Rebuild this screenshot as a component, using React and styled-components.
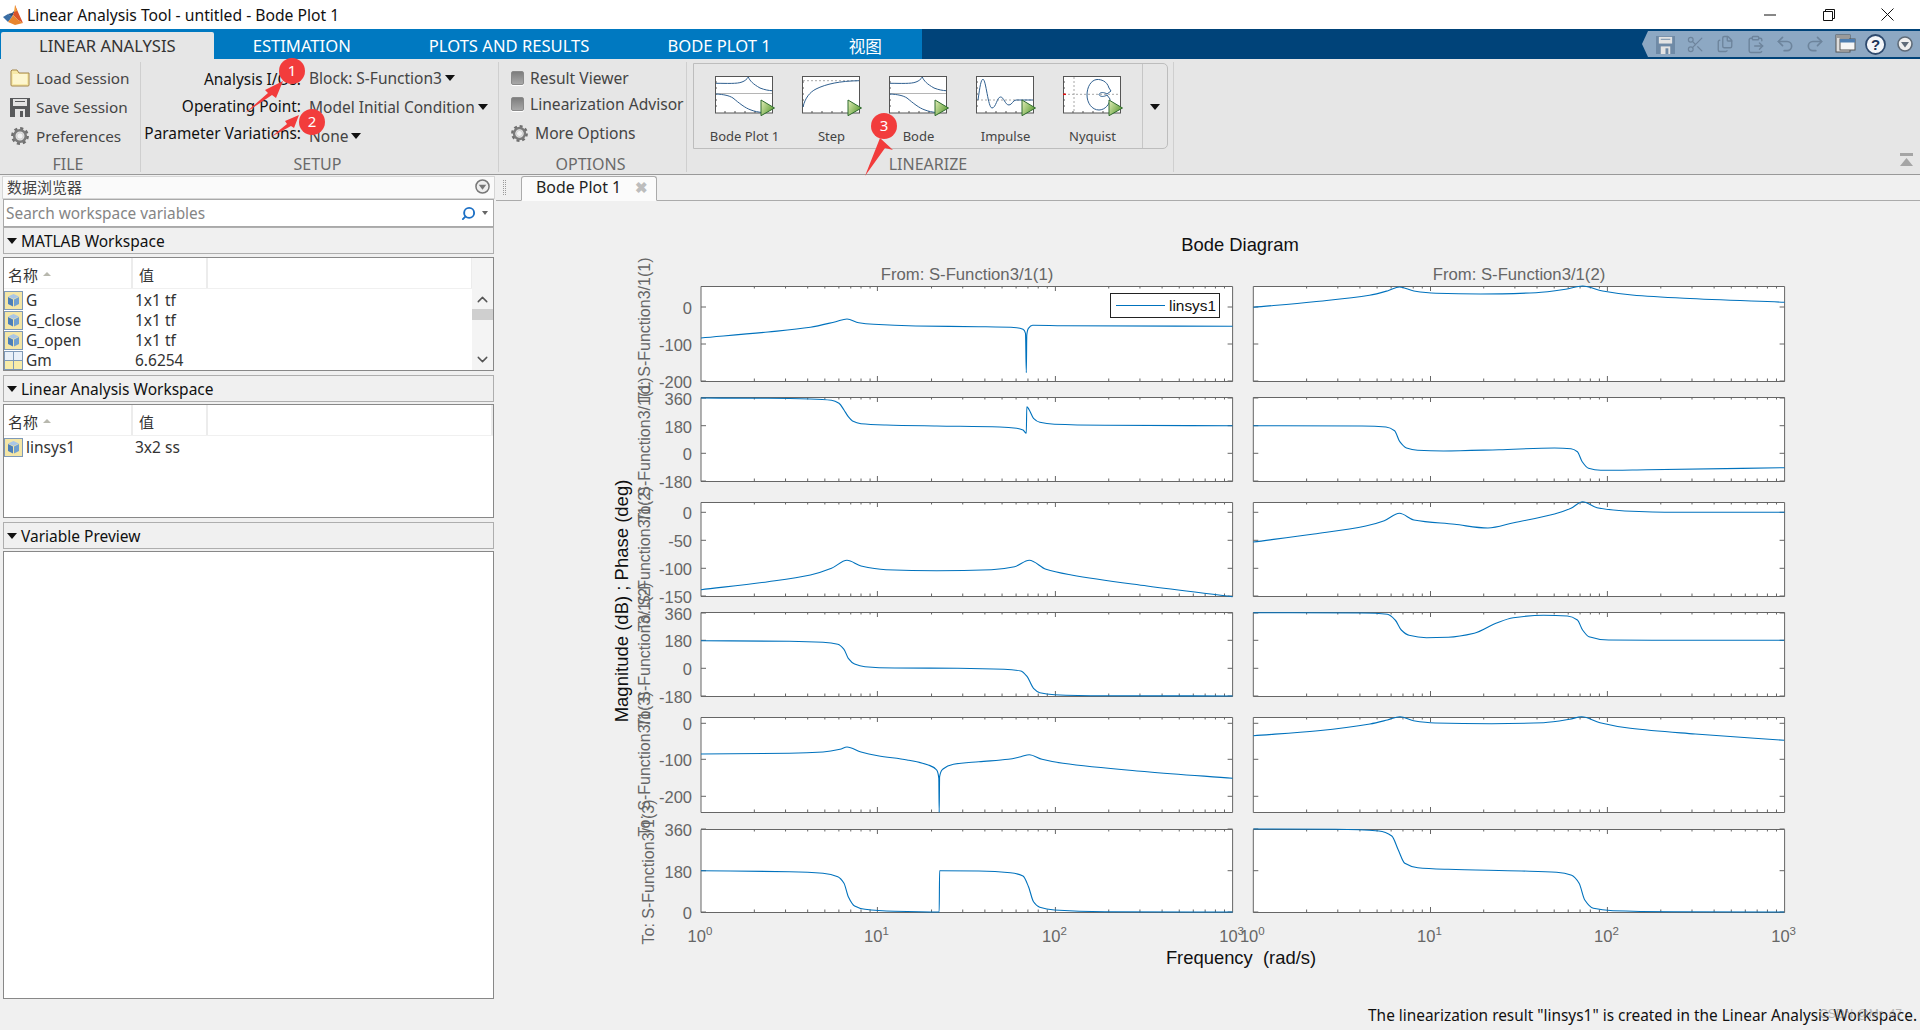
import styled, { createGlobalStyle } from 'styled-components'
import {
  ChevronDown,
  ChevronUp,
  ClipboardPaste,
  Files,
  Redo2,
  Scissors,
  Search,
  Undo2,
} from 'lucide-react'

const UI_FONT = '"Noto Sans", "Noto Sans CJK SC", sans-serif'
const PLOT_FONT = '"Liberation Sans", Arial, sans-serif'

const GlobalStyle = createGlobalStyle`
  html, body { margin: 0; padding: 0; background: #f0f0f0; overflow: hidden; }
  body { font-family: ${UI_FONT}; }
  * { box-sizing: border-box; }
`

/* ---------- shell ---------- */
const Root = styled.div`
  position: relative;
  width: 1920px;
  height: 1030px;
  display: flex;
  flex-direction: column;
  overflow: hidden;
  background: #f0f0f0;
`
const TitleBar = styled.div`
  height: 29px;
  background: #fff;
  display: flex;
  align-items: center;
  padding-left: 3px;
  flex: none;
`
const TitleText = styled.span`
  margin-left: 3px;
  font-size: 15.7px;
  color: #111;
  white-space: nowrap;
`
const WindowControls = styled.div`
  margin-left: auto;
  display: flex;
  padding-right: 3px;
`
const WindowButton = styled.div`
  width: 59px;
  height: 29px;
  display: flex;
  align-items: center;
  justify-content: center;
`

/* ---------- ribbon tabs ---------- */
const TabBar = styled.div`
  height: 30px;
  flex: none;
  display: flex;
  background: #004379;
`
const TabStrip = styled.div`
  width: 922px;
  background: #0079c1;
  display: flex;
  align-items: flex-end;
  padding-left: 1px;
`
const RibbonTab = styled.div`
  height: ${p => (p.$active ? 27 : 30)}px;
  padding: ${p => (p.$active ? '0 38px' : '3px 39px 0')};
  display: flex;
  align-items: center;
  font-size: 16.6px;
  white-space: nowrap;
  color: ${p => (p.$active ? '#333' : '#fff')};
  background: ${p => (p.$active ? '#e6e6e6' : 'transparent')};
  border-radius: ${p => (p.$active ? '2px 2px 0 0' : '0')};
`
const QuickAccess = styled.div`
  margin: 2px 0 2px auto;
  width: 278px;
  padding-left: 8px;
  background: #8da8c3;
  clip-path: polygon(6px 0, 100% 0, 100% 100%, 6px 100%, 0 50%);
  display: flex;
  align-items: center;
`
const QuickSlot = styled.div`
  width: 30px;
  display: flex;
  justify-content: center;
  color: #6d849c;
`

/* ---------- ribbon ---------- */
const Ribbon = styled.div`
  height: 116px;
  flex: none;
  display: flex;
  position: relative;
  background: #e6e6e6;
  border-bottom: 1px solid #999;
`
const Section = styled.div`
  width: ${p => p.$width}px;
  margin: 3px 0 2px;
  border-right: 1px solid #cfcfcf;
  display: flex;
  flex-direction: column;
`
const SectionBody = styled.div`
  flex: 1;
  display: flex;
`
const SectionLabel = styled.div`
  height: 18px;
  line-height: 20px;
  padding-right: 4px;
  text-align: center;
  font-size: 16px;
  color: #6a6a6a;
`
const FileList = styled.div`
  padding: 1px 0 0 10px;
`
const FileRow = styled.div`
  height: 29px;
  display: flex;
  align-items: center;
  gap: 6px;
  font-size: 15.3px;
  color: #444;
  white-space: nowrap;
`
const IconSlot = styled.div`
  width: 20px;
  height: 20px;
  display: flex;
  align-items: center;
  justify-content: center;
`
const SetupLabels = styled.div`
  width: 160px;
  padding-top: 4px;
  text-align: right;
  font-size: 15.4px;
  color: #111;
`
const SetupLabel = styled.div`
  height: 27px;
  line-height: 27px;
  white-space: nowrap;
`
const SetupValues = styled.div`
  margin-left: 8px;
  padding-top: 1px;
  font-size: 15.5px;
  color: #444;
`
const SetupValue = styled.div`
  height: 29px;
  display: flex;
  align-items: center;
  gap: 3px;
  white-space: nowrap;
`
const Caret = styled.span`
  width: 0;
  height: 0;
  border-left: 5.5px solid transparent;
  border-right: 5.5px solid transparent;
  border-top: 6px solid #111;
`
const OptionList = styled.div`
  padding: 3px 0 0 12px;
`
const OptionRow = styled.div`
  height: 26px;
  margin-top: ${p => (p.$spaced ? 3 : 0)}px;
  display: flex;
  align-items: center;
  gap: ${p => (p.$spaced ? 7 : 6)}px;
  font-size: 15.6px;
  color: #444;
  white-space: nowrap;
`
const ToggleIcon = styled.span`
  width: 13px;
  height: 14px;
  border-radius: 2px;
  background: linear-gradient(#7d7d7d, #a8a8a8);
  border: 1px solid #8a8a8a;
  box-shadow: 0 1px 0 #fff;
`
const Gallery = styled.div`
  width: 475px;
  height: 86px;
  margin: 1px 0 0 6px;
  display: flex;
  border: 1px solid #bdbdbd;
  border-radius: 0 5px 5px 0;
  padding-left: 7px;
`
const GalleryItems = styled.div`
  width: 442px;
  display: flex;
`
const GalleryItem = styled.div`
  width: 87px;
  padding-top: 12px;
  display: flex;
  flex-direction: column;
  align-items: center;
  font-size: 13px;
  color: #444;
  white-space: nowrap;
`
const GalleryName = styled.span`
  margin-top: 10px;
`
const GalleryMore = styled.div`
  margin-left: auto;
  width: 25px;
  border-left: 1px solid #c6c6c6;
  display: flex;
  align-items: center;
  justify-content: center;
  padding-top: 2px;
`
const CollapseIcon = styled.svg`
  position: absolute;
  right: 7px;
  bottom: 7px;
`

/* ---------- workspace ---------- */
const Workspace = styled.div`
  flex: 1;
  display: flex;
  min-height: 0;
`
const Sidebar = styled.div`
  width: 496px;
  flex: none;
  padding: 1px 1px 0 2px;
  display: flex;
  flex-direction: column;
`
const BrowserHeader = styled.div`
  height: 23px;
  padding: 0 4px 2px 4px;
  display: flex;
  align-items: center;
  justify-content: space-between;
  background: #fafafa;
  border: 1px solid #d6d6d6;
  font-size: 15px;
  color: #444;
`
const SearchBox = styled.div`
  height: 28px;
  margin: 0 0 0 1px;
  width: 491px;
  padding: 0 5px 0 2px;
  display: flex;
  align-items: center;
  background: #fff;
  border: 1px solid #a9a9a9;
  font-size: 15.4px;
  color: #858585;
`
const SearchIcon = styled(Search)`
  margin-left: auto;
  transform: scaleX(-1);
  color: #1c6fc4;
`
const SmallCaret = styled.span`
  margin-left: 6px;
  width: 0;
  height: 0;
  border-left: 3.5px solid transparent;
  border-right: 3.5px solid transparent;
  border-top: 4px solid #666;
`
const GroupHeader = styled.div`
  height: 27px;
  margin: ${p => p.$gap}px 0 0 1px;
  width: 491px;
  padding-left: 3px;
  display: flex;
  align-items: center;
  gap: 4px;
  background: #f0f0f0;
  border: 1px solid #aeaeae;
  font-size: 15.5px;
  color: #111;
`
const GroupCaret = styled.span`
  width: 0;
  height: 0;
  border-left: 5.5px solid transparent;
  border-right: 5.5px solid transparent;
  border-top: 6px solid #111;
`
const VarTable = styled.div`
  height: 114px;
  margin: ${p => p.$gap}px 0 0 1px;
  width: 491px;
  position: relative;
  background: #fff;
  border: 1px solid #888;
  overflow: hidden;
`
const VarHead = styled.div`
  height: 31px;
  display: grid;
  grid-template-columns: 129px 75px ${p => (p.$scroll ? '265px' : '1fr')};
  border-bottom: 1px solid #f0f0f0;
`
const HeadCell = styled.div`
  padding: 2px 0 0 ${p => (p.$value ? 6 : 4)}px;
  display: flex;
  align-items: center;
  gap: 5px;
  font-size: 15px;
  color: #333;
  border-right: 2px solid #ececec;
`
const SortCaret = styled.span`
  width: 0;
  height: 0;
  border-left: 4px solid transparent;
  border-right: 4px solid transparent;
  border-bottom: 4px solid #b8b8ae;
`
const VarRow = styled.div`
  height: 20px;
  display: grid;
  grid-template-columns: 22px 109px 1fr;
  align-items: center;
  font-size: 15.5px;
  color: #333;
  white-space: nowrap;
`
const ScrollTrack = styled.div`
  position: absolute;
  right: 0;
  top: 0;
  bottom: 0;
  width: 21px;
  padding-top: 33px;
  background: #f4f4f4;
  display: flex;
  flex-direction: column;
  align-items: center;
  color: #555;
`
const ScrollThumb = styled.div`
  width: 100%;
  height: 11px;
  margin: 1px 0 31px;
  background: #cfcfcf;
`
const PreviewBox = styled.div`
  height: 448px;
  margin: 2px 0 0 1px;
  width: 491px;
  background: #fff;
  border: 1px solid #888;
`

/* ---------- document area ---------- */
const DocArea = styled.div`
  flex: 1;
  min-width: 0;
  display: flex;
  flex-direction: column;
`
const DocStrip = styled.div`
  height: 26px;
  padding-left: 7px;
  display: flex;
  align-items: flex-end;
  border-bottom: 1px solid #ababab;
`
const Grip = styled.div`
  width: 3px;
  height: 15px;
  margin: 0 15px 5px 0;
  border-left: 1px dotted #9a9a9a;
  border-right: 1px dotted #9a9a9a;
`
const DocTab = styled.div`
  width: 136px;
  height: 25px;
  margin-bottom: -1px;
  padding: 0 8px 4px 14px;
  display: flex;
  align-items: center;
  justify-content: space-between;
  background: #fbfbfb;
  border: 1px solid #ababab;
  border-bottom-color: #fbfbfb;
  border-radius: 3px 3px 0 0;
  font-size: 15.9px;
  color: #222;
`
const CloseGlyph = styled.span`
  font-size: 15px;
  font-weight: 700;
  color: #bdbdbd;
`
const PlotSvg = styled.svg`
  display: block;
  flex: none;
`
const StatusBar = styled.div`
  height: 29px;
  flex: none;
  margin-top: auto;
  padding: 0 3px 0 0;
  display: flex;
  align-items: center;
  justify-content: flex-end;
  font-size: 15.4px;
  color: #111;
  white-space: nowrap;
`
const Watermark = styled.div`
  position: absolute;
  right: 18px;
  bottom: 9px;
  font-family: ${PLOT_FONT};
  font-size: 12px;
  color: rgba(140, 140, 140, 0.6);
`
const Marker = styled.svg`
  position: absolute;
  left: ${p => p.$x}px;
  top: ${p => p.$y}px;
  overflow: visible;
  pointer-events: none;
`
const MarkerNumber = styled.text`
  font-family: ${UI_FONT};
  font-size: 15px;
  fill: #fff;
  text-anchor: middle;
`

/* ---------- plot text ---------- */
const PlotText = styled.text`
  font-family: ${PLOT_FONT};
  font-size: ${p => p.$size || 16}px;
  fill: ${p => p.$color || '#666'};
  text-anchor: ${p => p.$anchor || 'middle'};
`

/* ---------- small drawings ---------- */
const MatlabLogo = () => (
  <svg width="21" height="22" viewBox="0 0 21 22">
    <polygon points="0,13 5,10 9,13 5,18" fill="#3a6ea5" />
    <polygon points="5,10 9,13 12,6 9,9" fill="#2c4f7c" />
    <polygon points="12,1 15,8 20,19 15,16 10,11 9,13 12,6" fill="#d9532a" />
    <polygon points="9,13 10,11 15,16 20,19 12,21 5,18" fill="#e8862e" />
    <polygon points="12,1 14,7 11,8" fill="#f2a23c" />
  </svg>
)

const FolderIcon = () => (
  <svg width="20" height="19" viewBox="0 0 20 19">
    <path d="M1 3 L1 17 Q1 18 2 18 L18 18 Q19 18 19 17 L19 5 L9 5 L7 2 L2 2 Z" fill="#f7e9a8" stroke="#a5874a" />
    <path d="M3 6 H17 V16 H3 Z" fill="#fdf6cf" />
  </svg>
)

const FloppyIcon = ({ color = '#58595b', size = 20 }) => (
  <svg width={size} height={size} viewBox="0 0 20 20">
    <path d="M0 1 H20 V20 H0 Z" fill={color} />
    <rect x="3" y="2" width="14" height="7" fill="#e3e3e3" />
    <rect x="5" y="4" width="10" height="1" fill={color} />
    <rect x="5" y="12" width="10" height="8" fill="#e3e3e3" />
    <rect x="10" y="14" width="3" height="6" fill={color} />
  </svg>
)

const GearIcon = ({ size = 18 }) => (
  <svg width={size} height={size} viewBox="0 0 18 18">
    <circle cx="9" cy="9" r="7.4" fill="none" stroke="#6f6f6f" strokeWidth="3" strokeDasharray="3 2.8" />
    <circle cx="9" cy="9" r="5.8" fill="none" stroke="#7a7a7a" strokeWidth="2.6" />
    <circle cx="9" cy="9" r="3.2" fill="#f1f1f1" stroke="#b5b5b5" strokeWidth="0.6" />
  </svg>
)

const RoundDown = ({ size = 15, color = '#777' }) => (
  <svg width={size} height={size} viewBox="0 0 16 16">
    <circle cx="8" cy="8" r="7" fill="#eee" stroke={color} strokeWidth="1.6" />
    <polygon points="4,6 12,6 8,11.5" fill={color} />
  </svg>
)

const CubeIcon = () => (
  <svg width="19" height="19" viewBox="0 0 19 19">
    <rect x="0.5" y="0.5" width="18" height="18" fill="#f4e6a6" stroke="#7e99b8" />
    <polygon points="9.5,3 15,5.5 9.5,8 4,5.5" fill="#a9c6e6" />
    <polygon points="4,6 9,8.5 9,15.5 4,13" fill="#4d7fb8" />
    <polygon points="15,6 10,8.5 10,15.5 15,13" fill="#6f9fd0" />
  </svg>
)

const GridIcon = () => (
  <svg width="19" height="19" viewBox="0 0 19 19">
    <rect x="0.5" y="0.5" width="18" height="18" fill="#fff" stroke="#7e99b8" />
    <rect x="1" y="10" width="8" height="8" fill="#f8eca8" />
    <rect x="10" y="10" width="8" height="8" fill="#f8eca8" />
    <rect x="1" y="1" width="8" height="8" fill="#e9f0f8" />
    <rect x="10" y="1" width="8" height="8" fill="#e9f0f8" />
    <path d="M9.5 1 V18 M1 9.5 H18" stroke="#7e99b8" />
  </svg>
)

const WindowStackIcon = () => (
  <svg width="21" height="20" viewBox="0 0 21 20">
    <rect x="1" y="1" width="14" height="17" fill="#ddd" stroke="#555" />
    <rect x="1" y="1" width="14" height="3" fill="#9a9a9a" />
    <rect x="5" y="5" width="15" height="11" fill="#f6f6f6" stroke="#555" />
    <rect x="5" y="5" width="15" height="3.5" fill="#4f7eb0" />
  </svg>
)

const HelpIcon = () => (
  <svg width="21" height="21" viewBox="0 0 21 21">
    <circle cx="10.5" cy="10.5" r="9.5" fill="#f4f6f9" stroke="#2e4a6e" strokeWidth="1.8" />
    <text x="10.5" y="16" textAnchor="middle" fontFamily={PLOT_FONT} fontSize="15" fontWeight="700" fill="#1d3557">?</text>
  </svg>
)

const PlayBadge = () => (
  <g>
    <polygon points="46,24 59.5,32 46,39.7" fill="url(#playFill)" stroke="#2f6b2f" strokeWidth="1" />
  </g>
)

const ThumbFrame = ({ children }) => (
  <svg width="60" height="41" viewBox="0 0 60 41">
    <defs>
      <linearGradient id="playFill" x1="0" y1="0" x2="1" y2="0.6">
        <stop offset="0" stopColor="#e2eeb8" />
        <stop offset="1" stopColor="#5d9c34" />
      </linearGradient>
    </defs>
    <rect x="0.5" y="0.5" width="57" height="36.5" fill="#fff" stroke="#555" />
    <path d="M0 6 h2 M0 12 h2 M0 18 h2 M0 24 h2 M0 30 h2 M10 37 v-2 M20 37 v-2 M30 37 v-2 M40 37 v-2 M50 37 v-2" stroke="#555" strokeWidth="1" />
    {children}
    <PlayBadge />
  </svg>
)

const THUMB_LINE = { fill: 'none', stroke: '#2f5f8f', strokeWidth: 1 }

const BodeThumb = () => (
  <ThumbFrame>
    <path d="M1 17.5 H57" stroke="#b5b5b5" />
    <path d="M1 7.3 C12 7.3 22 8 27 6 C30 5 32 3 33.3 1 C35 5 38 8 45 12 C50 14 54 14.5 57 14.7" {...THUMB_LINE} />
    <path d="M1 18 C9 18.5 14 19.5 18 22 C24 27 30 32 36 34 C40 35.5 43 36 47 36.5" {...THUMB_LINE} />
  </ThumbFrame>
)
const StepThumb = () => (
  <ThumbFrame>
    <path d="M1 4.7 H57" stroke="#a8a8a8" strokeDasharray="2 2" />
    <path d="M1 31 C3 22 8 16 14 13 C24 8 38 5 57 4.7" {...THUMB_LINE} />
  </ThumbFrame>
)
const ImpulseThumb = () => (
  <ThumbFrame>
    <path d="M1 24 H57" stroke="#a8a8a8" strokeDasharray="2 2" />
    <path d="M2 24 C4 10 5 3.3 7 3.3 C10 3.3 12 32 16 32 C20 32 21 21 24.5 21 C28 21 29 29 33 29 C36 29 37 24 40 24 H57" {...THUMB_LINE} />
  </ThumbFrame>
)
const NyquistThumb = () => (
  <ThumbFrame>
    <path d="M11 1 V36 M1 18.3 H57" stroke="#a8a8a8" strokeDasharray="2 2" />
    <path d="M0 18.3 h3" stroke="#e01010" strokeWidth="1.5" />
    <path d="M46 12 C44 5 38 3.3 34 3.5 C28 4 24 11 24 19 C24 27 29 34 36 34 C42 34 47 28 47 23 L44 19 C41 21 37 21 36 18.5 C37 16 41 16 44 18 L48 15 Z" {...THUMB_LINE} />
  </ThumbFrame>
)

/* ---------- bode data, in page pixels ---------- */
const smoothPath = pts => {
  const n = pts.length
  const h = []
  const s = []
  for (let i = 0; i < n - 1; i++) {
    h[i] = pts[i + 1][0] - pts[i][0]
    s[i] = (pts[i + 1][1] - pts[i][1]) / h[i]
  }
  const m = [s[0]]
  for (let i = 1; i < n - 1; i++) {
    m[i] = s[i - 1] * s[i] <= 0
      ? 0
      : (3 * (h[i - 1] + h[i])) / ((2 * h[i] + h[i - 1]) / s[i - 1] + (h[i] + 2 * h[i - 1]) / s[i])
  }
  m[n - 1] = s[n - 2]
  let d = `M${pts[0][0]} ${pts[0][1]}`
  for (let i = 0; i < n - 1; i++) {
    const c = h[i] / 3
    d += `C${pts[i][0] + c} ${pts[i][1] + m[i] * c} ${pts[i + 1][0] - c} ${pts[i + 1][1] - m[i + 1] * c} ${pts[i + 1][0]} ${pts[i + 1][1]}`
  }
  return d
}

const COLUMNS = [
  { left: 701, right: 1232.6, major: [877.4, 1055.4] },
  { left: 1253.3, right: 1784.6, major: [1430.5, 1607.4] },
]

const ROWS = [
  { top: 286, bottom: 381, ticks: [['0', 307], ['-100', 344], ['-200', 381]] },
  { top: 397, bottom: 481, ticks: [['360', 398], ['180', 425.7], ['0', 453.3], ['-180', 481]] },
  { top: 502, bottom: 596, ticks: [['0', 512.3], ['-50', 540.3], ['-100', 568.3], ['-150', 596]] },
  { top: 612, bottom: 696, ticks: [['360', 613], ['180', 640.3], ['0', 668.3], ['-180', 696]] },
  { top: 717, bottom: 812, ticks: [['0', 723.3], ['-100', 759.3], ['-200', 796.3]] },
  { top: 829, bottom: 912, ticks: [['360', 829], ['180', 870.7], ['0', 912]] },
]

const CURVES = [
  [[701,338],[768,332],[810.4,327.3],[835.7,321.7],[847,319],[858.8,322.7],[873.6,324.3],[915.7,326],[978.8,326.7],[1016.7,327.7],[1023,329.3],[1025.5,333.3],[1026.3,372.7],[1026.8,335],[1028.4,328.3],[1032.7,325.3],[1063,325.7],[1232.6,326.3]],
  [[701,398],[768,398.3],[810,399],[831.5,400.3],[839,403.3],[844,410],[848.3,416.7],[852.5,421],[861,423.7],[886,425],[936.7,426],[999.8,427],[1016.7,428.3],[1023,430],[1026.3,433.3],[1026.8,406.7],[1029.3,410],[1033.5,418.3],[1039.8,422.3],[1054.5,424.3],[1105,425.3],[1232.6,425.7]],
  [[701,589.7],[768,581.7],[810.4,575],[831.5,568.3],[847,560.3],[861,566],[886,569.7],[936.7,570.7],[991.4,569.7],[1014.6,566.7],[1029.3,560.3],[1046,569.3],[1071.4,575],[1147,586],[1232.6,596.7]],
  [[701,640.7],[789.4,641.3],[823,642.3],[837.8,644.3],[844,649.3],[848.3,658.3],[854.6,664],[865,666.7],[894.6,668],[957.8,668.3],[1004,669.3],[1020.9,671],[1027.2,676.7],[1033.5,688.3],[1039.8,692.7],[1054.5,694.7],[1105,695.7],[1232.6,696]],
  [[701,754],[789.4,753.3],[823,752],[840,749.3],[847,747],[861,752],[877.8,755.7],[907.2,760],[928.3,765],[936.7,770],[938.8,778.3],[939.2,812.3],[939.6,776.7],[943,769],[953.5,764.3],[978.8,761.7],[1008.3,759.3],[1020.9,756.7],[1029.3,754.7],[1042,759.3],[1063,763.3],[1147,771.7],[1232.6,778.3]],
  [[701,870.7],[789.4,871.7],[823,873.3],[837.8,876.7],[844,883.3],[848.3,896.7],[854.6,906],[865,909.3],[894.6,911.3],[939.2,912],[939.6,870.7],[978.8,871],[1010.4,872.7],[1023,876],[1028.5,886.7],[1033.5,901.7],[1039.8,907.3],[1054.5,910],[1105,911.7],[1232.6,912]],
  [[1253.3,307.3],[1314,301.7],[1369.5,295.3],[1388,290.7],[1399.5,287],[1413.9,291],[1436,293.3],[1480.5,294],[1536,292.7],[1565.6,289.3],[1582.6,286],[1602.6,291],[1632,295],[1684,298.3],[1784.6,302.3]],
  [[1253.3,425.7],[1362,426],[1386,427],[1394.6,430.7],[1399.8,441.7],[1406.5,448],[1417.6,450.3],[1443.5,451],[1499,449.7],[1554.5,448],[1571,448.7],[1577.4,451.7],[1582.2,461.7],[1588.5,468.3],[1600.7,470.3],[1647,469.7],[1784.6,467.7]],
  [[1253.3,542],[1314,534],[1365.8,526],[1384.3,520.7],[1399.5,513.3],[1413.9,520],[1454.6,524.3],[1487.9,528],[1513.8,522.7],[1554.5,514],[1571,508.3],[1582.6,501.7],[1597,507.7],[1624.8,511],[1676.5,512.3],[1784.6,512.3]],
  [[1253.4,612.7],[1361.4,613],[1387.4,614.3],[1395.2,620],[1401.3,630],[1409,635.3],[1426.5,637.7],[1448.2,637.3],[1474.2,633.3],[1495.9,623.3],[1513.2,617.7],[1543.6,615.3],[1567.4,616],[1577.4,620],[1582.6,630],[1589,636.7],[1608.6,640],[1652,640.3],[1784.2,640.3]],
  [[1253.4,735.7],[1318,730.7],[1370,724],[1387.4,720],[1400,716.7],[1413.5,720.7],[1435,723],[1491.5,723.7],[1543.6,722.7],[1569.6,719.3],[1581.7,716.7],[1600,722.7],[1630.3,728.3],[1695.3,734],[1784.2,740.3]],
  [[1253.4,829],[1335.4,829.3],[1378.8,831],[1391.8,836],[1398.3,850],[1404.8,863.3],[1417.8,867.7],[1448.2,869.3],[1521.9,871],[1556.6,872.3],[1571.7,875.3],[1579.1,883.3],[1584.8,900],[1593.4,908.3],[1613,910.7],[1673.6,911.7],[1784.2,912]],
]

const OUTPUT_LABELS = [
  ['To: S-Function3/1(1)', 645, 330],
  ['To: S-Function3/1(1)', 645, 450],
  ['To: S-Function3/1(2)', 645, 559],
  ['To: S-Function3/1(2)', 645, 655],
  ['To: S-Function3/1(3)', 645, 764],
  ['To: S-Function3/1(3)', 649, 872],
]

const MINOR = [2, 3, 4, 5, 6, 7, 8, 9].map(v => Math.log10(v))

const minorTicks = (left, right) => {
  const decade = (right - left) / 3
  const out = []
  for (let d = 0; d < 3; d++) {
    MINOR.forEach(v => out.push(left + (d + v) * decade))
  }
  return out
}

const Axes = ({ col, row }) => {
  const { left, right, major } = col
  const { top, bottom, ticks } = row
  let d = `M${left} ${top + 0.5}H${right}V${bottom + 0.5}H${left}Z`
  minorTicks(left, right).forEach(x => {
    d += `M${x} ${top}v2.5M${x} ${bottom}v-2.5`
  })
  major.forEach(x => {
    d += `M${x} ${top}v5M${x} ${bottom}v-5`
  })
  ticks.forEach(([, y]) => {
    d += `M${left} ${y}h5M${right} ${y}h-5`
  })
  return (
    <>
      <rect x={left} y={top} width={right - left} height={bottom - top} fill="#fff" />
      <path d={d} fill="none" stroke="#666" strokeWidth="1" />
    </>
  )
}

const XTick = ({ x, power }) => (
  <PlotText x={x} y={942} $size={16.5}>
    10
    <tspan dy="-7" fontSize="11.5">{power}</tspan>
  </PlotText>
)

const BodePlot = () => (
  <PlotSvg width="1424" height="800" viewBox="496 201 1424 800">
    {COLUMNS.map(col =>
      ROWS.map(row => <Axes key={`${col.left}-${row.top}`} col={col} row={row} />)
    )}
    {CURVES.map((pts, i) => (
      <path key={i} d={smoothPath(pts)} fill="none" stroke="#0072bd" strokeWidth="1.1" />
    ))}

    {ROWS.map(row =>
      row.ticks.map(([label, y]) => (
        <PlotText key={`${row.top}-${label}`} x={692} y={y + 7} $size={16.5} $anchor="end">{label}</PlotText>
      ))
    )}
    {OUTPUT_LABELS.map(([text, x, y]) => (
      <PlotText key={`${text}${y}`} x={x + 5} y={y} transform={`rotate(-90 ${x + 5} ${y})`}>{text}</PlotText>
    ))}
    <PlotText x={628} y={601} $size={18.5} $color="#111" transform="rotate(-90 628 601)">Magnitude (dB) ; Phase (deg)</PlotText>

    {COLUMNS.map(col =>
      [col.left, ...col.major, col.right].map((x, i) => (
        <XTick key={x} x={x - 1} power={i} />
      ))
    )}

    <PlotText x={1240} y={251} $size={18.4} $color="#111">Bode Diagram</PlotText>
    <PlotText x={967} y={280} $size={16.7}>From: S-Function3/1(1)</PlotText>
    <PlotText x={1519} y={280} $size={16.7}>From: S-Function3/1(2)</PlotText>
    <PlotText x={1241} y={964} $size={18.4} $color="#111" xmlSpace="preserve">Frequency  (rad/s)</PlotText>

    <rect x="1110.5" y="293.5" width="109" height="24" fill="#fff" stroke="#222" />
    <path d="M1116 305.5H1165" stroke="#0072bd" strokeWidth="1.1" />
    <PlotText x={1169} y={311} $size={15.4} $color="#111" $anchor="start">linsys1</PlotText>
  </PlotSvg>
)

/* ---------- annotations ---------- */
const Annotation = ({ x, y, w, h, points, cx, cy, n }) => (
  <Marker $x={x} $y={y} width={w} height={h} viewBox={`${x} ${y} ${w} ${h}`}>
    <polygon points={points} fill="#f23c3c" />
    <circle cx={cx} cy={cy} r="13" fill="#f23c3c" />
    <MarkerNumber x={cx} y={cy + 5}>{n}</MarkerNumber>
  </Marker>
)

/* ---------- table data ---------- */
const VARS = [
  { name: 'G', value: '1x1 tf', Icon: CubeIcon },
  { name: 'G_close', value: '1x1 tf', Icon: CubeIcon },
  { name: 'G_open', value: '1x1 tf', Icon: CubeIcon },
  { name: 'Gm', value: '6.6254', Icon: GridIcon },
]

const TableHead = ({ scroll }) => (
  <VarHead $scroll={scroll}>
    <HeadCell>名称<SortCaret /></HeadCell>
    <HeadCell $value>值</HeadCell>
    <HeadCell />
  </VarHead>
)

const VarLine = ({ name, value, Icon }) => (
  <VarRow>
    <Icon />
    <span>{name}</span>
    <span>{value}</span>
  </VarRow>
)

export default function App() {
  return (
    <Root>
      <GlobalStyle />
      <TitleBar>
        <MatlabLogo />
        <TitleText>Linear Analysis Tool - untitled - Bode Plot 1</TitleText>
        <WindowControls>
          <WindowButton>
            <svg width="12" height="2" viewBox="0 0 12 2"><path d="M0 1H12" stroke="#111" /></svg>
          </WindowButton>
          <WindowButton>
            <svg width="12" height="12" viewBox="0 0 12 12">
              <path d="M0.5 2.5H9.5V11.5H0.5Z M2.5 2.5V0.5H11.5V9.5H9.5" fill="none" stroke="#111" />
            </svg>
          </WindowButton>
          <WindowButton>
            <svg width="13" height="13" viewBox="0 0 13 13"><path d="M0.5 0.5L12.5 12.5M12.5 0.5L0.5 12.5" stroke="#111" /></svg>
          </WindowButton>
        </WindowControls>
      </TitleBar>

      <TabBar>
        <TabStrip>
          <RibbonTab $active>LINEAR ANALYSIS</RibbonTab>
          <RibbonTab>ESTIMATION</RibbonTab>
          <RibbonTab>PLOTS AND RESULTS</RibbonTab>
          <RibbonTab>BODE PLOT 1</RibbonTab>
          <RibbonTab>视图</RibbonTab>
        </TabStrip>
        <QuickAccess>
          <QuickSlot><FloppyIcon color="#6f8aa6" size={19} /></QuickSlot>
          <QuickSlot><Scissors size={19} strokeWidth={1.5} /></QuickSlot>
          <QuickSlot><Files size={18} strokeWidth={1.8} /></QuickSlot>
          <QuickSlot><ClipboardPaste size={19} strokeWidth={1.8} /></QuickSlot>
          <QuickSlot><Undo2 size={20} strokeWidth={2} /></QuickSlot>
          <QuickSlot><Redo2 size={20} strokeWidth={2} /></QuickSlot>
          <QuickSlot><WindowStackIcon /></QuickSlot>
          <QuickSlot><HelpIcon /></QuickSlot>
          <QuickSlot><RoundDown size={16} color="#5f6b78" /></QuickSlot>
        </QuickAccess>
      </TabBar>

      <Ribbon>
        <Section $width={141}>
          <SectionBody>
            <FileList>
              <FileRow><IconSlot><FolderIcon /></IconSlot>Load Session</FileRow>
              <FileRow><IconSlot><FloppyIcon /></IconSlot>Save Session</FileRow>
              <FileRow><IconSlot><GearIcon /></IconSlot>Preferences</FileRow>
            </FileList>
          </SectionBody>
          <SectionLabel>FILE</SectionLabel>
        </Section>
        <Section $width={358}>
          <SectionBody>
            <SetupLabels>
              <SetupLabel>Analysis I/Os:</SetupLabel>
              <SetupLabel>Operating Point:</SetupLabel>
              <SetupLabel>Parameter Variations:</SetupLabel>
            </SetupLabels>
            <SetupValues>
              <SetupValue>Block: S-Function3<Caret /></SetupValue>
              <SetupValue>Model Initial Condition<Caret /></SetupValue>
              <SetupValue>None<Caret /></SetupValue>
            </SetupValues>
          </SectionBody>
          <SectionLabel>SETUP</SectionLabel>
        </Section>
        <Section $width={188}>
          <SectionBody>
            <OptionList>
              <OptionRow><ToggleIcon />Result Viewer</OptionRow>
              <OptionRow><ToggleIcon />Linearization Advisor</OptionRow>
              <OptionRow $spaced><GearIcon size={17} />More Options</OptionRow>
            </OptionList>
          </SectionBody>
          <SectionLabel>OPTIONS</SectionLabel>
        </Section>
        <Section $width={487}>
          <SectionBody>
            <Gallery>
              <GalleryItems>
                <GalleryItem><BodeThumb /><GalleryName>Bode Plot 1</GalleryName></GalleryItem>
                <GalleryItem><StepThumb /><GalleryName>Step</GalleryName></GalleryItem>
                <GalleryItem><BodeThumb /><GalleryName>Bode</GalleryName></GalleryItem>
                <GalleryItem><ImpulseThumb /><GalleryName>Impulse</GalleryName></GalleryItem>
                <GalleryItem><NyquistThumb /><GalleryName>Nyquist</GalleryName></GalleryItem>
              </GalleryItems>
              <GalleryMore><Caret /></GalleryMore>
            </Gallery>
          </SectionBody>
          <SectionLabel>LINEARIZE</SectionLabel>
        </Section>
        <CollapseIcon width="13" height="14" viewBox="0 0 13 14">
          <path d="M0 1.5H13" stroke="#a5a5a5" strokeWidth="3" />
          <polygon points="6.5,5 13,13 0,13" fill="#a5a5a5" />
        </CollapseIcon>
      </Ribbon>

      <Workspace>
        <Sidebar>
          <BrowserHeader>数据浏览器<RoundDown /></BrowserHeader>
          <SearchBox>
            Search workspace variables
            <SearchIcon size={15} strokeWidth={3} />
            <SmallCaret />
          </SearchBox>
          <GroupHeader $gap={0}><GroupCaret />MATLAB Workspace</GroupHeader>
          <VarTable $gap={3}>
            <TableHead scroll />
            {VARS.map(v => <VarLine key={v.name} {...v} />)}
            <ScrollTrack>
              <ChevronUp size={17} />
              <ScrollThumb />
              <ChevronDown size={17} />
            </ScrollTrack>
          </VarTable>
          <GroupHeader $gap={4}><GroupCaret />Linear Analysis Workspace</GroupHeader>
          <VarTable $gap={2}>
            <TableHead />
            <VarLine name="linsys1" value="3x2 ss" Icon={CubeIcon} />
          </VarTable>
          <GroupHeader $gap={4}><GroupCaret />Variable Preview</GroupHeader>
          <PreviewBox />
        </Sidebar>
        <DocArea>
          <DocStrip>
            <Grip />
            <DocTab>Bode Plot 1<CloseGlyph>✖</CloseGlyph></DocTab>
          </DocStrip>
          <BodePlot />
        </DocArea>
      </Workspace>

      <StatusBar>The linearization result "linsys1" is created in the Linear Analysis Workspace.</StatusBar>
      <Watermark>CSDN @Mr. 47</Watermark>

      <Annotation x={240} y={55} w={70} h={62} cx={292} cy={71} n="1"
        points="245,113 268,93 265,90 283,81 276,98 272,95" />
      <Annotation x={265} y={105} w={65} h={36} cx={312} cy={122} n="2"
        points="271,137 287,124 285,121 299,115 294,128 291,126" />
      <Annotation x={860} y={110} w={40} h={70} cx={884} cy={126} n="3"
        points="865,176 880,138 893,150 885,148" />
    </Root>
  )
}
